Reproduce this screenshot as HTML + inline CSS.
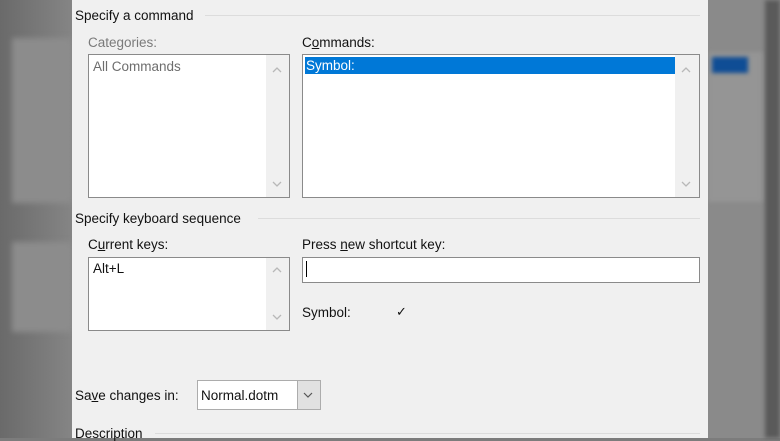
<!DOCTYPE html>
<html><head><meta charset="utf-8"><style>
*{margin:0;padding:0;box-sizing:border-box}
body{width:780px;height:438px;overflow:hidden;position:relative;background:#7c7c7c;font-family:"Liberation Sans",sans-serif;font-size:13.5px;color:#111}
.a{position:absolute}
.dlg{left:72px;top:0;width:636px;height:438px;background:#f0f0f0}
.line{height:1px;background:#dcdcdc}
.box{background:#fff;border:1px solid #8a8a8a}
.sb{background:#f0f0f0}
u{text-decoration:underline}
</style></head><body>
<div class="a" style="left:0;top:0;width:72px;height:438px;background:linear-gradient(90deg,#6a6a6a,#858585)"></div>
<div class="a" style="left:12px;top:38px;width:60px;height:165px;background:#8c8c8c;filter:blur(3px)"></div>
<div class="a" style="left:12px;top:242px;width:60px;height:90px;background:#8c8c8c;filter:blur(3px)"></div>
<div class="a" style="left:708px;top:0;width:72px;height:438px;background:#8a8a8a"></div>
<div class="a" style="left:765px;top:0;width:15px;height:438px;background:#5a5a5a;filter:blur(2px)"></div>
<div class="a" style="left:708px;top:52px;width:54px;height:150px;background:#959595;filter:blur(2px)"></div>
<div class="a" style="left:712px;top:57px;width:36px;height:16px;background:#0f4d95;filter:blur(2px)"></div>
<div class="a dlg"></div>

<svg width="0" height="0" style="position:absolute"><defs>
<symbol id="up" viewBox="0 0 12 8"><path d="M2 6 L6 2 L10 6" fill="none" stroke="#b8b8b8" stroke-width="1.3"/></symbol>
<symbol id="dn" viewBox="0 0 12 8"><path d="M2 2 L6 6 L10 2" fill="none" stroke="#b8b8b8" stroke-width="1.3"/></symbol>
</defs></svg>

<div class="a" style="left:75px;top:8px">Specify a command</div>
<div class="a line" style="left:205px;top:15px;width:495px"></div>
<div class="a" style="left:88px;top:35px;color:#7a7a7a">Categories:</div>
<div class="a box" style="left:88px;top:54px;width:202px;height:144px"></div>
<div class="a sb" style="left:266px;top:55px;width:23px;height:142px"></div>
<div class="a" style="left:93px;top:59px;color:#6d6d6d">All Commands</div>
<svg class="a" style="left:271px;top:66px" width="12" height="8"><use href="#up"/></svg>
<svg class="a" style="left:271px;top:180px" width="12" height="8"><use href="#dn"/></svg>

<div class="a" style="left:302px;top:35px">C<u>o</u>mmands:</div>
<div class="a box" style="left:302px;top:54px;width:398px;height:144px"></div>
<div class="a sb" style="left:675px;top:55px;width:24px;height:142px"></div>
<div class="a" style="left:305px;top:57px;width:370px;height:17px;background:#0078d7;color:#fff;padding-left:1px;line-height:18px">Symbol:</div>
<svg class="a" style="left:680px;top:66px" width="12" height="8"><use href="#up"/></svg>
<svg class="a" style="left:680px;top:180px" width="12" height="8"><use href="#dn"/></svg>

<div class="a" style="left:75px;top:211px">Specify keyboard sequence</div>
<div class="a line" style="left:258px;top:218px;width:442px"></div>
<div class="a" style="left:88px;top:237px">C<u>u</u>rrent keys:</div>
<div class="a box" style="left:88px;top:257px;width:202px;height:74px"></div>
<div class="a sb" style="left:266px;top:258px;width:23px;height:72px"></div>
<div class="a" style="left:93px;top:261px">Alt+L</div>
<svg class="a" style="left:271px;top:266px" width="12" height="8"><use href="#up"/></svg>
<svg class="a" style="left:271px;top:313px" width="12" height="8"><use href="#dn"/></svg>

<div class="a" style="left:302px;top:237px">Press <u>n</u>ew shortcut key:</div>
<div class="a box" style="left:302px;top:257px;width:398px;height:26px"></div>
<div class="a" style="left:306px;top:261px;width:1px;height:16px;background:#000"></div>
<div class="a" style="left:302px;top:305px">Symbol:</div>
<div class="a" style="left:396px;top:304px;font-size:13px">&#10003;</div>

<div class="a" style="left:75px;top:388px">Sa<u>v</u>e changes in:</div>
<div class="a box" style="left:197px;top:380px;width:124px;height:30px;border-color:#acacac"></div>
<div class="a" style="left:297px;top:381px;width:23px;height:28px;background:#e1e1e1;border-left:1px solid #acacac"></div>
<svg class="a" style="left:302px;top:391px" width="12" height="8"><path d="M2 2 L6 6 L10 2" fill="none" stroke="#555" stroke-width="1.2"/></svg>
<div class="a" style="left:201px;top:388px">Normal.dotm</div>

<div class="a" style="left:75px;top:426px">Description</div>
<div class="a line" style="left:155px;top:433px;width:545px"></div>
</body></html>
